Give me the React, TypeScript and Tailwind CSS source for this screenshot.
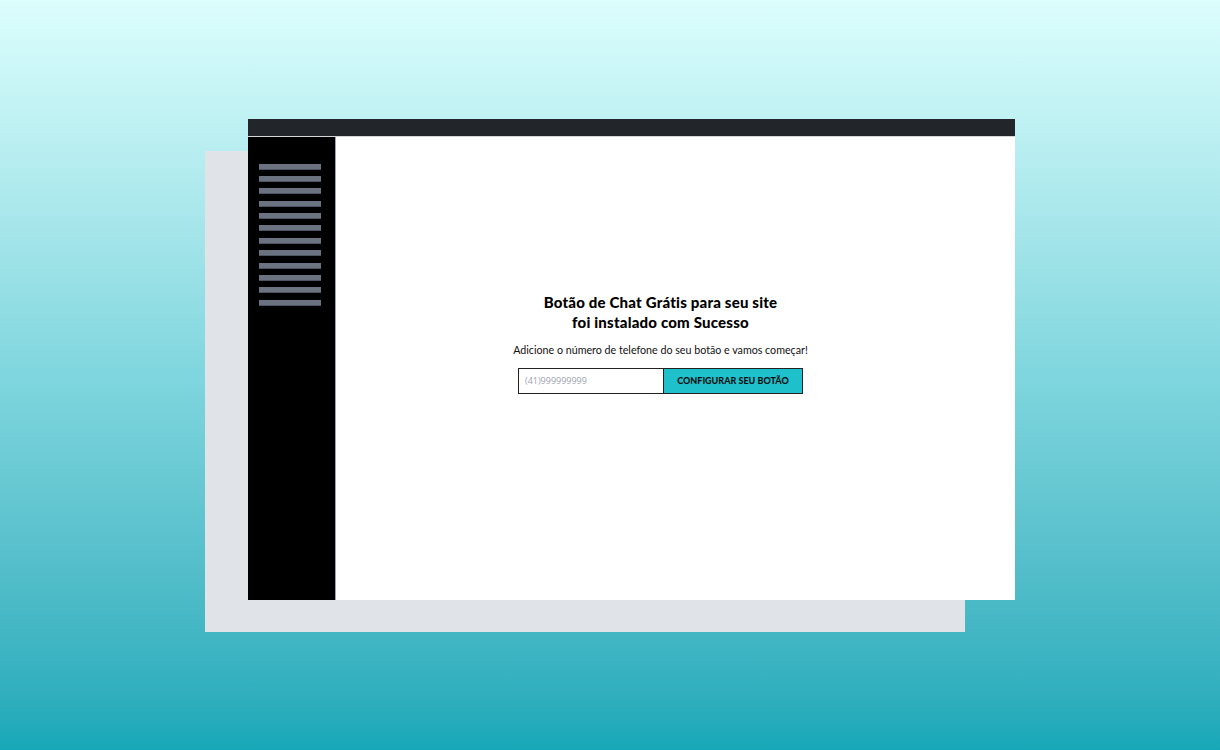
import React from 'react';

const menuBars = Array.from({ length: 12 }, (_, i) => i);

export default function App() {
    return (
        <div className="w-[1220px] h-[750px] flex items-center justify-center bg-gradient-to-b from-[#dcfefd] via-[#7fd6de] to-[#16a8b8] font-['Lato',sans-serif]">
            {/* stacked panels: grey card behind, browser window in front */}
            <div className="grid w-[810px] h-[513px]">
                <div className="col-start-1 row-start-1 mt-[32px] w-[760px] h-[481px] bg-[#e0e3e8]" />

                <div className="col-start-1 row-start-1 ml-[43px] w-[767px] h-[481px] flex flex-col">
                    <div className="h-[18px] bg-[#222529] border-b border-[#d4d6d9]" />
                    <div className="flex flex-1">
                        {/* sidebar */}
                        <div className="w-[88px] bg-black border-r border-[#9ca3af] pt-[27px] pl-[11px] flex flex-col gap-[6.4px]">
                            {menuBars.map((i) => (
                                <div key={i} className="w-[62px] h-[6px] bg-[#6b7280] border-b border-[#4b5563]" />
                            ))}
                        </div>

                        {/* content */}
                        <div className="flex-1 bg-white flex flex-col items-center justify-center pr-[30px] pb-[51px]">
                            <h1 className="text-[15px] leading-[20px] font-black text-black text-center tracking-[0.2px]">
                                Botão de Chat Grátis para seu site
                                <br />
                                foi instalado com Sucesso
                            </h1>
                            <p className="mt-[11px] text-[10.7px] leading-[14px] text-[#111]">
                                Adicione o número de telefone do seu botão e vamos começar!
                            </p>
                            <div className="mt-[11px] flex h-[26px]">
                                <input
                                    type="text"
                                    placeholder="(41)999999999"
                                    className="w-[146px] h-full border border-[#222] px-[6px] text-[9px] text-[#444] placeholder:text-[#9ca3af] font-['Open_Sans',sans-serif] outline-none"
                                />
                                <button className="w-[139px] h-full border border-l-0 border-[#222] bg-[#1ec0cc] text-[9px] font-black text-[#111]">
                                    CONFIGURAR SEU BOTÃO
                                </button>
                            </div>
                        </div>
                    </div>
                </div>
            </div>
        </div>
    );
}
